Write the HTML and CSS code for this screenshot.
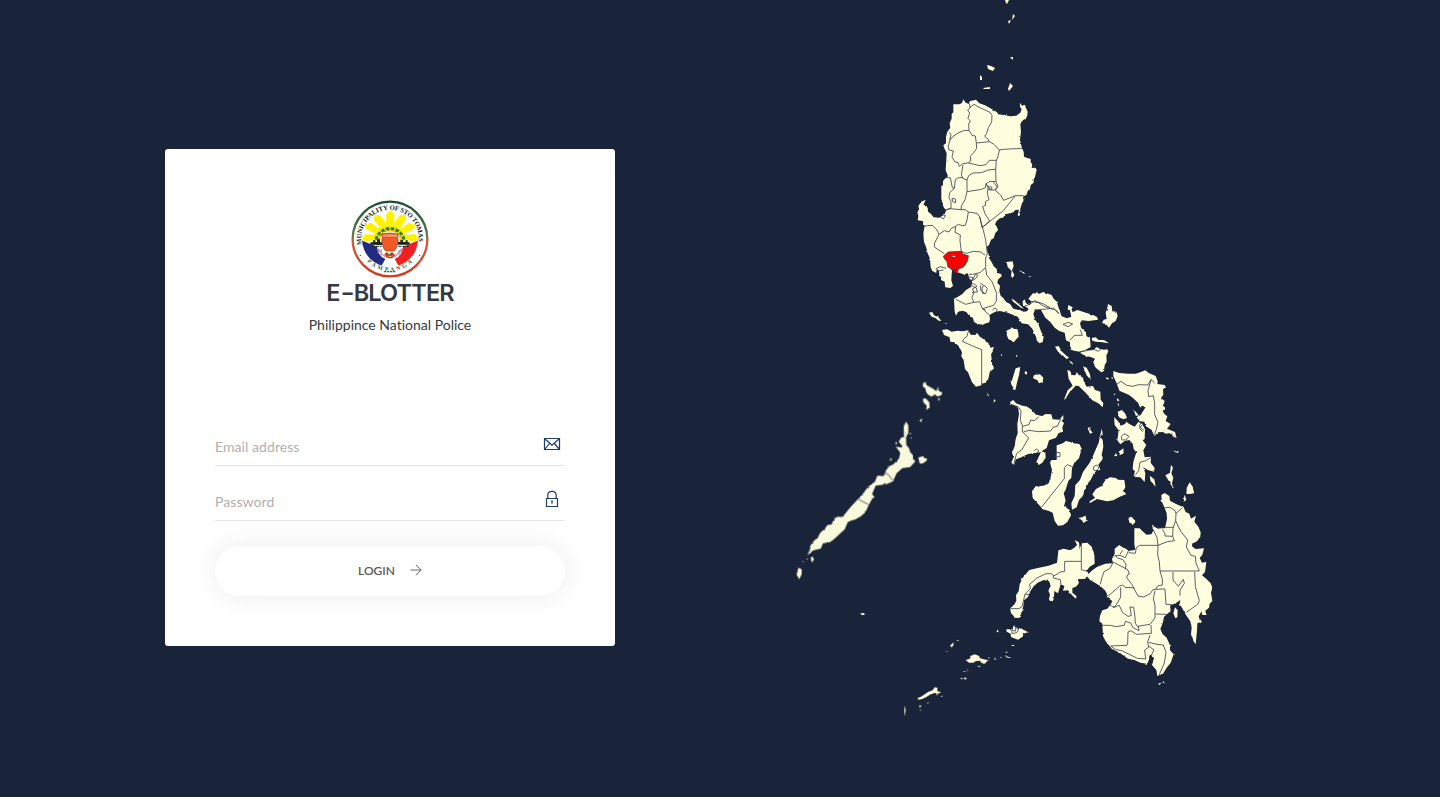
FILE: index.html
```html
<!DOCTYPE html>
<html lang="en">
<head>
<meta charset="utf-8">
<title>E-BLOTTER</title>
<link rel="stylesheet" href="styles.css">
</head>
<body>
<main class="page">
<section class="login-side">
<form class="card">
<svg class="seal" viewBox="0 0 234 234">
<defs>
<linearGradient id="rim" x1="0" y1="0" x2="0" y2="1"><stop offset="0" stop-color="#174f2b"/><stop offset=".42" stop-color="#567850"/><stop offset=".55" stop-color="#d25b3c"/><stop offset="1" stop-color="#cf3c20"/></linearGradient>
<path id="arc-top" d="M33 134A86 86 0 1 1 201 134"/>
<path id="arc-bottom" d="M45 181A96 96 0 0 0 189 181"/>
<clipPath id="inner"><circle cx="117" cy="117" r="84"/></clipPath>
</defs>
<circle cx="117" cy="117" r="112" fill="#fff" stroke="url(#rim)" stroke-width="7"/>
<g clip-path="url(#inner)">
<path d="M31 121L78 140Q82 170 103 177L86 207L50 190L31 150Z" fill="#222b82"/>
<path d="M203 121L156 140Q152 170 131 177L148 207L184 190L203 150Z" fill="#f21e20"/>
</g>
<g fill="#fff200">
<path d="M105 72L106 43L118 31L130 43L130 72Z"/><path d="M86 82L69 60L70 44L88 46L107 72Z"/><path d="M148 82L165 60L164 44L146 46L127 72Z"/><path d="M71 99L46 88L41 75L59 68L86 87Z"/><path d="M163 99L188 88L193 75L175 68L148 87Z"/><path d="M70 121L41 124L33 115L42 102L74 106Z"/><path d="M164 121L193 124L201 115L192 102L160 106Z"/>
</g>
<path d="M65 124A52 52 0 0 1 169 124Z" fill="#fff200"/>
<path d="M75 119A43 43 0 0 1 159 119" fill="none" stroke="#317b39" stroke-width="9" stroke-dasharray="11 4"/>
<path d="M83 119A35 35 0 0 1 151 119" fill="none" stroke="#e46b22" stroke-width="4" stroke-dasharray="5 5"/>
<path d="M86 124A31 31 0 0 1 148 124Z" fill="#f4f1df"/>
<path d="M58 134V127H66V121H73V126H78V118H87V127H94V135ZM140 134V126H148V120H156V126H164V121H170V127H176V134Z" fill="#17241f"/>
<path d="M63 139H92M142 139H173" stroke="#17241f" stroke-width="3" stroke-dasharray="9 3"/>
<path d="M91 103Q117 96 143 103L139 112Q145 125 134 147L129 153H105L99 147Q89 125 95 112Z" fill="#f15a26" stroke="#903018" stroke-width="2"/>
<path d="M91 104Q117 98 143 104L139 112H95Z" fill="#fa9364" stroke="#903018"/>
<path d="M84 153L92 146L102 153L106 175L91 166ZM150 153L142 146L132 153L128 175L143 166Z" fill="#fff"/>
<path d="M80 146L101 171M154 146L132 171M83 147L82 157L91 152L90 165M151 147L152 156L143 152L145 165" stroke="#aa84ad" stroke-width="5" stroke-dasharray="3 2" fill="none"/>
<path d="M99 164L107 157L114 162L122 157L134 165L126 173L117 168L108 175Z" fill="#ed421c"/><path d="M105 158L112 164M125 158L119 166M112 173L125 173" stroke="#28753a" stroke-width="4"/>
<text class="seal-text"><textPath href="#arc-top" textLength="298" lengthAdjust="spacing">MUNICIPALITY OF STO TOMAS</textPath></text>
<text class="seal-text seal-text-low"><textPath href="#arc-bottom" startOffset="5" textLength="150" lengthAdjust="spacing">PAMPANGA</textPath></text>
<circle cx="28" cy="166" r="2" fill="#333"/><circle cx="206" cy="166" r="2" fill="#333"/>
<path d="M99 215H134" stroke="#466850" stroke-width="4" stroke-dasharray="7 2"/>
</svg>
<h1 class="title">E<span class="dash">-</span>BLOTTER</h1>
<p class="subtitle">Philippince National Police</p>
<div class="fields">
<label class="field"><input class="input" type="email" placeholder="Email address"><svg class="icon" viewBox="0 0 18 18"><path d="M1.5 3.5H16.5V14.5H1.5ZM2 4L9 10.3L16 4M2 14L6.4 8.5M16 14L11.5 8.5"/></svg></label>
<label class="field"><input class="input" type="password" placeholder="Password"><svg class="icon" viewBox="0 0 18 18"><path d="M3.5 8.5H14.5V16.5H3.5ZM4.8 8V5.2C4.8 2.5 6.5 1.3 9 1.3S13.2 2.5 13.2 5.2V8M9 10.5V13.8M8.2 11.2H9.8"/></svg></label>
</div>
<button class="login" type="button"><span>LOGIN</span><svg class="arrow" viewBox="0 0 12 12"><path d="M.5 6H11M6 .8L11.2 6L6 11.2"/></svg></button>
</form>
</section>
<section class="map-side">
<svg class="map" viewBox="720 0 720 797">
<defs><filter id="coast" filterUnits="userSpaceOnUse" x="720" y="0" width="720" height="797" color-interpolation-filters="sRGB"><feTurbulence type="fractalNoise" baseFrequency=".22" numOctaves="2" seed="4" result="n"/><feDisplacementMap in="SourceGraphic" in2="n" scale="2" xChannelSelector="R" yChannelSelector="G"/></filter></defs>
<g class="land">
<path d="M1005 0H1009L1007 4L1006 3ZM1013 14L1015 16L1012 20ZM1008 21L1011 20L1009 24ZM987 65L991 66L995 68L993 71L988 69ZM1010 57L1013 57V60ZM980 75L982 77V80L980 80ZM983 88L990 87V89H984ZM1010 83L1013 86L1009 91L1008 89Z"/>
<g filter="url(#coast)">
<g transform="translate(900 85) scale(.33333)">
<path d="M160 58L178 58L186 54L190 43L197 53L207 57L209 49L228 44L238 55L255 61L275 72L291 82L295 88L313 90L330 94L349 92L361 83L365 73L360 65V53L366 62H375L383 80L382 91L377 103L366 108L361 118L363 140L360 165L366 190L371 200L372 215L382 219L392 222L392 232L397 238L395 249L406 248L410 254L405 275L401 283L401 293L392 300L390 313L383 318L380 329L369 335L371 347L366 355L361 371L360 388L353 391L357 374L346 375L340 382L320 387L308 398L300 400L290 408L285 418L291 426L294 436L286 444L281 460L273 464L267 480L261 485L262 501L266 508L267 519L276 533L281 544L290 552L292 563L304 568L305 573L294 584L292 594L300 602L298 618L302 632L310 639L317 650L330 657L340 671L360 676L371 680L381 679L386 672L378 665L369 662L368 649L374 643L378 655L389 660L395 650L385 641L399 625L418 626L430 621L455 630L460 640L470 650L480 680L485 694L501 700L514 695L509 672L519 681L532 675L560 684L578 689L591 696L594 704L565 708L546 706L540 715L544 730L558 742L559 753L570 760L572 786L557 794L540 800L522 797L510 793L510 772L498 766L494 743L478 738L464 728L451 711L436 698L423 675L405 674L400 687L406 706L415 717L423 739L431 756L428 771L419 775L411 768L408 755L397 731L384 718L365 715L353 695L325 684L300 678L286 680L268 690L270 701L268 712L254 716L249 719L233 717L222 711L219 699L206 691L199 681L187 677L174 681L168 692L164 680L162 641L174 635L187 627L198 615L213 606L217 590L208 580L203 565L191 568L172 562L169 548L157 547L155 568L154 586L159 603L151 609L136 607L134 590L124 584L123 576L118 573L117 558L110 551L109 564L97 558L92 547L90 521L83 505L78 485L72 471L70 445L74 424L68 408L53 406L55 393L52 382L58 375L55 363L65 349L77 345L70 360L83 368L84 380L91 385L101 397L117 398L126 393L134 388L138 375L131 367L126 350L124 341L124 306L129 300L129 288L137 279L144 274L137 256L140 205L133 190L130 181L138 175L138 155L142 140L151 128L149 114L155 101L155 87L160 82Z"/>
<path d="M126 735L141 733L155 740L173 737L187 739L205 736L212 749L226 750L231 743L240 756L253 762L260 773L269 781L271 788L282 786L278 797L273 805L276 835L282 850L269 862L265 882L255 893L248 894L244 901L228 905L216 892L204 862L195 852L191 826L184 814L186 802L176 783L163 772L151 770L149 757L132 750Z"/>
<path d="M320 531L338 529L341 544L336 556L343 570L338 579L333 573L335 558L323 546ZM356 554L369 562L363 561ZM371 560L375 567L366 563ZM386 572L396 575H387ZM335 640L349 650L372 671L363 668L338 649ZM87 683L97 681L102 691L115 697L124 708L116 707L106 699L95 695ZM135 713L143 716H136ZM322 735L332 732L333 727L343 732L352 732L355 745L356 756L347 764L342 772L325 762L320 749Z"/>
</g>
<g transform="translate(990 270) scale(.33333)">
<path d="M354 102L365 108L367 124L379 125L383 138L377 153L366 160L357 173L347 162L336 159L341 149L350 147L347 129L351 118ZM235 105L248 112L244 121L233 119ZM305 204L317 202L326 210L342 210L357 220L337 217L318 215L307 212ZM288 240L310 240L320 231L331 237L342 239L351 238L355 244L349 257L350 275L344 286L342 303L334 307L317 293L310 277L315 266L300 260L287 259L270 248ZM195 230L206 228L214 243L231 259L237 262L231 268L219 257L206 248ZM237 270L249 280L247 284ZM279 289L290 293L300 313L302 330L290 316ZM232 301L242 302L244 315L256 316L260 307L266 314L279 323L282 337L290 350L309 348L315 360L331 365L332 389L340 400L338 412L325 400L307 391L287 368L266 348L257 347L237 369L227 386L222 389L233 361L248 347L236 326ZM77 295L91 291L87 315L81 338L76 360L68 358L72 347L64 338L68 324ZM132 315L150 313L160 323L158 336L147 340L142 330L129 325ZM105 303L112 307L109 315L104 310ZM370 303L388 309L414 311L437 311L451 307L466 301L476 309L497 318L503 334L502 342L524 345L528 352L519 358L520 374L513 384L524 393L519 407L526 413L518 423L524 433L532 439L527 453L542 462L531 476L555 486L560 504L546 488L528 491L518 486L505 487L493 498L485 480L467 468L463 455L449 454L440 442L452 435L467 411L450 412L444 398L428 383L416 374L388 362L380 340L370 318ZM430 417L445 434L438 439ZM383 425L396 420L406 431L411 444L400 448L387 442ZM380 384L389 391L382 394ZM371 370L376 373L372 376ZM383 400L388 402L384 406ZM350 321L357 326L352 329ZM365 320L370 325L365 327ZM33 253H38V257H33ZM78 254L84 257L79 258Z"/>
</g>
<g transform="translate(980 380) scale(.33333)">
<path d="M91 65L100 60L108 70L127 77L139 79L153 88L168 104L186 108L197 102L214 103L218 118L238 119L250 105L250 117L245 123L252 129L247 142L249 155L236 159L228 173L207 181L200 204L181 217L144 222L124 232L108 238L102 254L94 248L101 231L96 218L104 199L107 177L113 160L112 132L117 103L115 85L102 75L91 75ZM184 214L196 218L197 233L187 248L176 255L169 246ZM230 196L245 191L260 183L280 190L298 192L305 206L297 235L283 248L276 264L274 293L265 303L257 329L251 340L257 361L252 379L269 390L273 406L262 426L249 436L234 437L224 423L218 398L205 392L188 388L182 380L158 354L156 334L167 319L191 317L206 310L212 292L216 270L210 247L215 240H230ZM365 146L368 160L361 171L368 180L370 200L365 224L368 237L355 254L361 269L348 274L340 283L332 300L320 314L313 330L308 349L297 360L290 382L276 389L274 370L284 348L286 315L300 300L309 276L330 247L340 225L356 188ZM323 144L332 142L331 150L338 158L330 161ZM377 299L390 292L408 294L414 299L433 300L436 321L430 334L439 342L418 351L400 361L381 364L351 357L329 370L329 364L345 354L337 343L348 327L365 318ZM402 110L416 126L422 137L435 132L439 125L449 133L464 140L475 126L486 131L495 148L494 177L488 181L499 195L490 211L494 232L513 230L512 248L524 264L522 275L503 270L490 262L496 280L494 306L481 292L466 291L461 287L465 274L458 267L461 242L469 217L461 207L458 191L448 180L434 183L421 193L412 181L416 151L404 135ZM416 215L430 205L431 220L419 226ZM402 229L408 219L412 228ZM573 254L579 263L574 280L580 293L576 309L580 327L568 305L556 286L570 278ZM623 322L630 307L638 322L642 340L622 342ZM614 344L619 360L612 364ZM509 287L523 298L527 320L512 304ZM580 210L589 215L596 212L594 219L585 216ZM295 414L307 412L316 406L319 417L324 419L311 429L305 420ZM446 413L455 411L466 424L462 432L449 429ZM571 156L579 161L589 174L580 170ZM20 37L27 47L24 49ZM43 57L47 62L40 68ZM92 3L111 2L107 14L100 23L94 14Z"/>
</g>
<g transform="translate(1070 480) scale(.33333)">
<path d="M274 45L284 39L298 48L300 62L318 72L341 82L347 96L358 101L363 116L378 107L373 125L385 140L392 157L391 170L381 184L366 191L367 200L377 207L402 205L397 224L389 234L396 248L409 246L405 276L396 286L410 298L422 310L427 323L423 338L427 363L419 371L417 383L405 393L410 405H397L395 394L386 409L391 426L382 430L381 452L377 493L369 481L363 463L365 443L361 424L348 405L338 387L329 371L331 360L319 368L300 377L302 393L291 403L282 410L278 430L271 446L277 461L290 473L300 496L300 511L311 523L302 548L290 563L279 581L262 588L259 570L246 555L252 536L246 522L238 527L237 540L230 551L211 548L193 540L174 536L150 519L125 506L108 485L99 469L97 431L88 424L90 408L97 391L112 386L123 372L127 363L118 357L106 332L92 319L76 309L61 301L50 288L65 272L82 260L106 251L129 250L126 237L134 221L134 206L148 195L157 202L168 206L176 213L196 209L193 193V145L209 145L216 152L230 164L244 163L251 150L246 137L262 145H285L291 117L290 100L283 82L275 63Z"/>
<path d="M315 382L323 391L322 412L316 415L310 400ZM358 8L368 20L371 39L350 43L350 24ZM344 45L347 60L341 66ZM175 116L184 110L196 123L190 132L179 127ZM390 417L396 426L389 430ZM264 611L274 608L269 615ZM280 603L284 610L278 608Z"/>
</g>
<g transform="translate(990 530) scale(.33333)">
<path d="M205 61L221 56L241 61L253 53L261 45L254 30L267 37L269 54L276 40L292 38L305 50L313 75L314 101L299 110L290 122L296 131L286 146L263 148L267 158L258 170L247 174L247 188L260 199L257 206L243 192L234 181L219 182L223 168L212 163L204 190L193 183L192 200L177 210L180 194L175 182L182 168L177 153L161 150L143 158L131 169L121 184L114 201L102 211L100 228L96 244L88 264L76 263L62 248L61 234L72 226L79 212L78 195L86 184L89 163L98 143L118 120L140 115L176 107L201 98L203 82ZM177 202L192 205L188 214L179 212ZM49 298L69 298L69 288L84 294L99 297L114 307L100 311L98 320L84 329L63 321L62 311L50 305ZM22 298L25 305L20 307ZM65 345H72V348H66Z"/>
</g>
<g transform="translate(780 370) scale(.33333)">
<path class="pale" d="M378 155L385 166V188L378 203L379 225L387 234L391 248L396 251L398 265L406 274L390 291L367 294L350 309L341 329L339 334L318 343L287 347L276 372L284 382L277 385L266 405L256 427L241 440L226 448L204 455L194 478L180 491L164 506L150 516L129 520L122 536L100 541L82 556L90 538L92 525L104 510L113 504L120 489L135 475L142 465L155 463L162 446L174 440L187 442L201 424L211 412L233 388L247 376L256 361L267 348L285 335L292 317L311 318L318 301L327 289L340 283L357 266L361 248L347 230L365 233L367 228L356 215L365 201L372 202L371 170ZM415 263L429 258L434 265L441 265L440 272L429 280L419 281ZM430 38L435 37L441 46L459 56L468 63L475 53V62L487 68L484 75L472 80L465 73L454 80L443 73L438 65L436 55L428 49ZM429 85L438 86L448 97L449 112L439 120L440 107L430 97ZM474 84L480 85L476 94ZM418 152L427 145L424 156ZM92 561L98 560L102 569L95 578ZM55 593L65 598V613L57 628L50 614ZM80 565L85 567L79 569ZM67 573L73 576H67ZM390 188L395 190L391 194ZM392 201L396 204L391 206ZM348 212L351 222L346 223ZM331 264L336 267L330 274Z"/>
</g>
</g>
<g transform="translate(840 600) scale(.33333)">
<path d="M61 40L72 39L74 44L66 46ZM331 136L341 127L340 136L334 143ZM350 119L357 121L352 124ZM346 138L350 139ZM377 180L390 176L391 168L404 163L417 168L420 175L437 179L445 180L433 192L424 188L420 182L408 183L400 188L387 188ZM411 198L420 197V202ZM369 214L376 213L375 217ZM380 207L383 210V216ZM361 235L367 233L366 239ZM370 236L377 231L379 239ZM233 294L243 290L264 276L278 271L284 262L292 263L292 274L302 276L300 280L294 279L292 287L287 278L272 283L259 291L247 297L235 299ZM193 316L197 331L193 350ZM238 315L244 318L239 324ZM241 327L243 332H240ZM463 170L468 180H464ZM480 172L485 170L483 175ZM497 155H502V158H497ZM495 164L505 172L512 171L508 175L499 172ZM472 89L475 94L471 98ZM445 170L449 173L447 177ZM302 290L308 286L306 291ZM261 309L267 306L264 311ZM320 153L324 155L318 155ZM516 136H522V138H516Z"/>
</g>
</g>
<g class="borders">
<g transform="translate(900 85) scale(.33333)">
<path d="M208 56L211 68L203 75L209 84L204 100L211 108L206 117L207 136L190 137L174 144L157 156L150 165L145 184L147 195L160 198L156 216L164 230L174 233L178 244L187 237L205 233L213 227L211 214L222 202L230 190L229 174L226 153L216 151L207 136M208 68L222 58L240 68L270 82L276 92L275 111L265 128L260 145L254 154L264 162L268 170L230 174M268 170L282 178L298 195L311 193L366 190M298 195L294 214L289 226L268 226L258 239L240 242L205 234M289 226L287 253L264 255L245 263L219 264L206 272L201 285L188 280L184 269L189 240M287 253L288 290L270 289L258 296L256 308L245 313L201 320L201 285M258 296L264 308L262 326L267 344L256 350L257 361L248 365L255 386L269 408L246 428L240 397L231 385L205 381L196 374L183 374L184 363L195 344L201 320M288 290L294 304L286 316L302 330L311 346L346 332L371 332M346 332L326 357L310 377L246 428M189 278H175L166 284L163 310L149 323L147 338L153 350V369L138 375L150 371L184 374M137 278L151 278L157 308L163 310M148 142L153 149L149 165M260 299L267 306L268 315L284 315L292 306L280 292M268 305L276 307L275 313L265 312M156 340L166 342L167 353L158 350ZM120 395L127 390L137 391L130 402ZM205 381L201 405L196 421L187 422L175 418L167 424L154 430L147 441L133 437L117 448L111 435L98 421L82 422L70 425M117 448L104 474L103 486L133 506M167 424L165 442L181 450L180 468L184 500L200 505L220 499L243 501L250 507L256 510M239 396L250 436L257 465L262 507L257 519L257 547L240 563L218 568L206 568M257 549L260 570L276 590L290 625L289 648L281 661L247 671L268 690M257 675L247 671L239 650L221 652L197 658L167 643M206 575L219 578L214 588L226 582L234 571L226 568L220 582L207 593L224 598L231 604L217 612L222 622L216 637L221 652M210 600L229 609L232 621L216 622M241 594L250 601L246 612L248 625L257 626L262 610L251 600M242 601L242 616L253 625M278 676L283 669L291 673L290 680M107 552L120 545L139 550M114 558L131 555M206 736L201 754L194 759L187 769L218 783L245 794V900M370 665L393 656L403 647L431 657L450 668M403 675L440 672L460 669L477 685"/>
<path class="highlight" d="M130 514L145 501L185 499L188 507L205 512L203 526L195 540L187 548L175 551L173 560L168 564L166 553L161 549L157 556L151 550L144 546L141 530L134 522Z"/>
<path d="M151 514L160 511L167 513V518Z" fill="#ffffe0"/>
</g>
<g transform="translate(990 270) scale(.33333)"><path d="M122 94L145 98L160 108L181 116L195 119L207 131M219 163L235 157L248 162L234 170ZM240 211L253 196L277 196L271 179M269 246L296 241L311 238L325 244L332 237M380 343L393 334L410 346L429 349L445 344L474 345L483 328L494 339M483 330L474 362L476 380L490 377L494 400V434L504 456L499 478L493 495M453 455L448 470L462 481"/></g>
<g transform="translate(980 380) scale(.33333)"><path d="M93 73L115 81L123 92L121 121L127 137L127 155L146 174L125 210L110 220L102 250M127 139L147 134L152 120L164 122L176 110M130 156L147 151L176 155L212 153L219 142L232 139L243 115M163 212L169 207L177 213L170 219M229 217L240 218V230L224 231ZM185 381L236 317L253 296V263L262 254L277 260M341 260L350 255L357 264L349 273L341 270ZM424 170L432 161L447 169L438 180L426 180ZM514 232L497 242L480 247L476 272L465 287M486 135L479 145L488 155"/></g>
<g transform="translate(1070 480) scale(.33333)"><path d="M282 84L299 82L315 92L318 100L337 84M318 100L317 122L309 145L308 169L313 182L292 185L264 196L261 172L249 148M277 148L285 161V168L308 169M262 145L279 142H310M317 122L326 142L333 155L353 180L349 201L363 226L376 229L378 250L388 273H270M176 218L196 220L199 203L209 196H264L263 225L268 246L270 273L277 297V315L263 318L258 327L248 330L241 341L221 351L204 348L186 314L170 293L173 284L178 282L173 269L129 246M133 228L150 226L166 233L175 213M135 226L143 234L159 239L168 253L166 268M158 211L150 223M129 249L119 266L102 275L96 292L91 313M115 348L149 318L158 315L165 322L194 324M152 322V351L144 366L133 382L115 373M129 383L148 376L157 397L174 409L184 407L180 381L191 382L195 410L196 430L202 439L240 433L255 414V376L250 356L255 332M257 328L285 327L288 373L307 374M257 402L291 403M97 436L122 436L138 440L163 436L166 424L182 429L188 442L207 452L205 438M174 456L183 452L193 459L200 463L244 460L243 435M174 456L173 492L171 496L122 498L137 509L155 512L202 535L227 537L224 510L236 502L233 486L240 466M236 487L261 493L280 495L288 517L283 549L267 586M236 498L252 510L246 522M309 276V300L325 319L340 298L343 310L330 331V347M374 276L376 320L388 362L383 373L349 397"/></g>
<g transform="translate(990 530) scale(.33333)"><path d="M274 42V97L274 119L290 124M274 94H224V124L211 126L192 138L184 131L168 131L141 144L119 163L121 176L105 193L96 230L87 236H62M106 194L118 193M190 137V144L211 149L213 163M65 301L66 311L80 308L86 299L77 292L77 303Z"/></g>
<g transform="translate(780 370) scale(.33333)"><path d="M314 306L325 314L339 332M234 387L266 404"/></g>
</g>
<path class="highlight" d="M952 268L954 268L955 272.5L957 269L959 269L957 273L954 272Z"/>
</svg>
</section>
</main>
</body>
</html>
```

FILE: styles.css
```css
* { box-sizing: border-box; }
body { margin: 0; background: #192339; font-family: Lato, sans-serif; font-variant-ligatures: none; overflow: hidden; }
.page { display: grid; grid-template-columns: 1fr 1fr; height: 797px; }
.login-side { padding: 149px 0 0 165px; }
.card { width: 450px; height: 497px; padding: 51px 50px 50px; background: #fff; border-radius: 3px; display: flex; flex-direction: column; align-items: center; }
.seal { width: 78px; height: 78px; flex: none; }
.seal-text { font: bold 20px "Liberation Serif", serif; fill: #151515; }
.seal-text-low { font-size: 17px; fill: #35583c; }
.title { margin: -1px 0 0; height: 32px; font: 600 23.5px/32px Inter, sans-serif; letter-spacing: -.85px; color: #343a40; white-space: nowrap; }
.dash { display: inline-block; transform: scaleX(1.3); margin: 0 2px; }
.subtitle { margin: 4px 0 0; font-size: 14px; line-height: 24px; color: #343a40; white-space: nowrap; }
.fields { width: 350px; margin-top: 90px; }
.field { display: flex; height: 39px; border-bottom: 1px solid #e6e6e6; margin-bottom: 16px; }
.input { width: 320px; height: 36px; padding: 2px 0 0; border: 0; outline: 0; background: transparent; font: 14px Lato, sans-serif; letter-spacing: .07px; }
.input::placeholder { color: #b2afad; opacity: 1; }
.icon { width: 18px; height: 18px; margin: 8px 0 0 8px; fill: none; stroke: #203c69; stroke-width: 1.2; }
.login { width: 350px; height: 50px; flex: none; margin-top: 9px; padding: 0 0 2px; border: 0; border-radius: 25px; background: #fff; box-shadow: 0 0 28px rgba(0,0,0,.08); display: flex; align-items: center; justify-content: center; gap: 15px; color: #555; font: 500 12px Lato, sans-serif; -webkit-text-stroke: .1px #555; }
.arrow { width: 12px; height: 12px; margin-top: 0; fill: none; stroke: #666; stroke-width: 1; }
.map { display: block; width: 720px; height: 797px; }
.land { fill: #ffffe0; }
.pale { fill: #f9f9dc; }
.borders { fill: none; stroke: #30394c; stroke-width: 2.4; stroke-linejoin: round; }
.highlight { fill: #f00; stroke-width: 2.4; }
```
